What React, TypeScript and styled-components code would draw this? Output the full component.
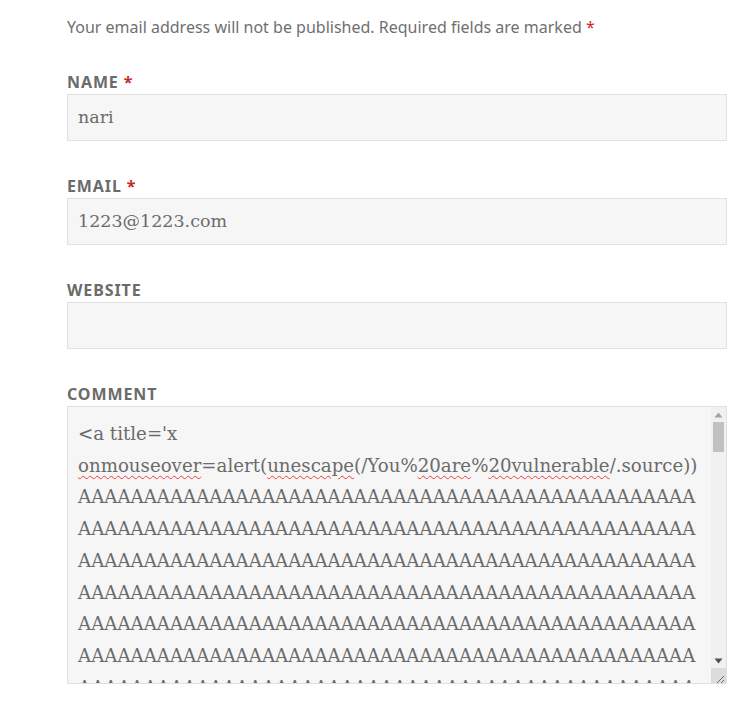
import styled, { createGlobalStyle } from 'styled-components';

const Global = createGlobalStyle`
    body {
        margin: 0;
        background: #fff;
        font-family: "Noto Sans", sans-serif;
    }
`;

const Form = styled.form`
    padding: 15px 20px 0 67px;
    width: 660px;
`;

const Notes = styled.p`
    margin: 0 0 31px;
    font-size: 16px;
    line-height: 24px;
    color: #6f6f6f;
`;

const Required = styled.span`
    color: #c9271e;
`;

const Field = styled.div`
    margin-bottom: 33px;
`;

const Label = styled.label`
    display: block;
    font-size: 16px;
    line-height: 24px;
    font-weight: 700;
    letter-spacing: 0.9px;
    text-transform: uppercase;
    color: #6b6b6b;
`;

const Input = styled.div`
    box-sizing: border-box;
    height: 47px;
    padding: 10px 10px;
    background: #f6f6f6;
    border: 1px solid #e1e1e1;
    font-family: "DejaVu Serif", serif;
    font-size: 17.5px;
    line-height: 25px;
    color: #6b6b6b;
`;

const TextArea = styled.div`
    box-sizing: border-box;
    display: flex;
    height: 278px;
    background: #f6f6f6;
    border: 1px solid #e1e1e1;
`;

const TextContent = styled.div`
    flex: 1;
    overflow: hidden;
    padding: 11px 0 0 10px;
    font-family: "DejaVu Serif", serif;
    font-size: 18.2px;
    line-height: 31.7px;
    color: #6b6b6b;
    white-space: nowrap;
`;

const ScrollBar = styled.div`
    width: 15px;
    display: flex;
    flex-direction: column;
    background: #f1f1f1;
`;

const ArrowButton = styled.div`
    height: 15px;
    display: flex;
    align-items: center;
    justify-content: center;
`;

const Track = styled.div`
    flex: 1;
    padding: 0 2px;
`;

const Thumb = styled.div`
    height: 30px;
    background: #c1c1c1;
`;

const Resizer = styled.div`
    height: 15px;
    background: #dcdcdc;
`;

const Misspelled = styled.span`
    text-decoration: underline wavy #f03c3c;
    text-decoration-thickness: 1px;
    text-underline-offset: 3px;
`;

const aRows = Array.from({ length: 8 }, () => 'A'.repeat(47));

export default function App() {
    return (
        <>
            <Global />
            <Form>
                <Notes>
                    Your email address will not be published. Required fields are marked <Required>*</Required>
                </Notes>
                <Field>
                    <Label>Name <Required>*</Required></Label>
                    <Input>nari</Input>
                </Field>
                <Field>
                    <Label>Email <Required>*</Required></Label>
                    <Input>1223@1223.com</Input>
                </Field>
                <Field>
                    <Label>Website</Label>
                    <Input />
                </Field>
                <Field>
                    <Label>Comment</Label>
                    <TextArea>
                        <TextContent>
                            <div>&lt;a title='x</div>
                            <div>
                                <Misspelled>onmouseover</Misspelled>=alert(<Misspelled>unescape</Misspelled>(/You%<Misspelled>20are</Misspelled>%<Misspelled>20vulnerable</Misspelled>/.source))
                            </div>
                            {aRows.map((row, i) => (
                                <div key={i}>{row}</div>
                            ))}
                        </TextContent>
                        <ScrollBar>
                            <ArrowButton>
                                <svg width="9" height="6" viewBox="0 0 9 6">
                                    <polygon points="0.5,5.5 8.5,5.5 4.5,0.5" fill="#a3a3a3" />
                                </svg>
                            </ArrowButton>
                            <Track>
                                <Thumb />
                            </Track>
                            <ArrowButton>
                                <svg width="9" height="6" viewBox="0 0 9 6">
                                    <polygon points="0.5,0.5 8.5,0.5 4.5,5.5" fill="#505050" />
                                </svg>
                            </ArrowButton>
                            <Resizer>
                                <svg width="15" height="15" viewBox="0 0 15 15">
                                    <line x1="13" y1="6" x2="6" y2="13" stroke="#6e6e6e" strokeWidth="1" />
                                    <line x1="13" y1="10" x2="10" y2="13" stroke="#6e6e6e" strokeWidth="1" />
                                </svg>
                            </Resizer>
                        </ScrollBar>
                    </TextArea>
                </Field>
            </Form>
        </>
    );
}
